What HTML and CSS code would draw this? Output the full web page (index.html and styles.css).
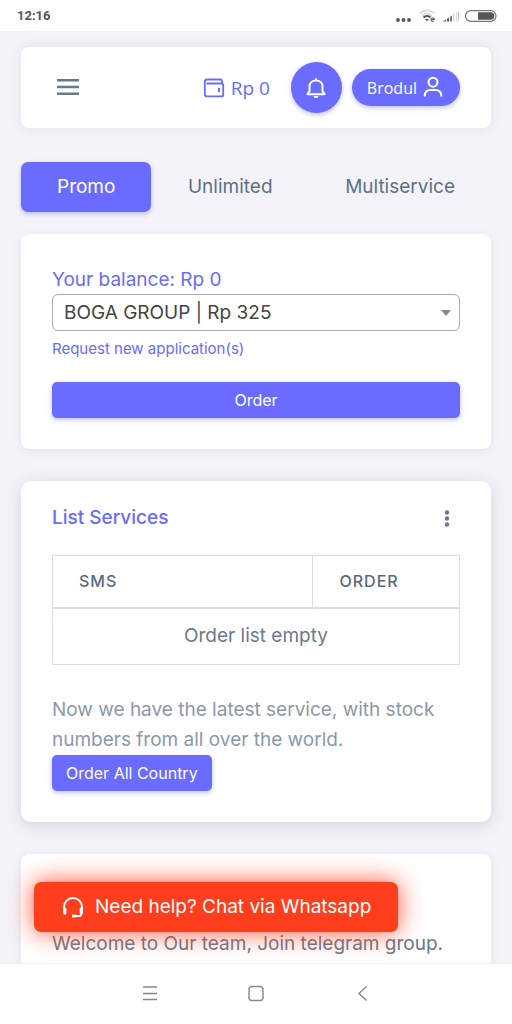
FILE: index.html
```html
<!DOCTYPE html>
<html lang="en">
<head>
<meta charset="utf-8">
<meta name="viewport" content="width=device-width, initial-scale=1">
<title>Order</title>
<link rel="stylesheet" href="styles.css">
</head>
<body>
<div class="status-bar">
  <span class="clock">12:16</span>
  <svg class="status-icons" width="102" height="16" viewBox="0 0 102 16" aria-hidden="true">
    <g fill="#555"><circle cx="3" cy="12" r="1.9"/><circle cx="8.500" cy="12" r="1.9"/><circle cx="14" cy="12" r="1.9"/></g>
    <g fill="none" stroke-width="1.7">
      <path d="M24.500 5.500Q32 -1 39.500 5.500M27 8Q32 3.500 37 8" stroke="#ddd"/>
      <path d="M28.500 9.500Q32 6.500 35.500 9.500" stroke="#555" stroke-width="2"/>
    </g>
    <path d="M30 11h4l-2 2.300z" fill="#555"/>
    <path d="M36 11.500h3.500a1.700 1.700 0 1 0-.6 1.400" fill="none" stroke="#666" stroke-width="1.200"/>
    <path d="M48 13.500l3-2v2zM52 11l2-1.500v4h-2z" fill="#555"/>
    <path d="M55 8.700l2-1.300v6.100h-2z" fill="#777"/>
    <path d="M58 6.500l1.800-1.200v8.200H58zM61 4.500l1.500-1v10H61z" fill="#ddd"/><path d="M63 3.200l1-.7v11h-1z" fill="#ccc"/>
    <rect x="70.500" y="2.700" width="30.500" height="10.600" rx="5.300" fill="#fff" stroke="#777" stroke-width="1.200"/>
    <path d="M83 4.200h12.500a3.800 3.800 0 0 1 0 7.600H83z" fill="#555"/>
  </svg>
</div>

<main class="app">
  <header class="card navbar">
    <button class="icon-button" aria-label="Menu">
      <svg width="26" height="26" viewBox="0 0 26 26"><path d="M2 5.200h22M2 12h22M2 18.800h22" stroke="#697a8d" stroke-width="2.600"/></svg>
    </button>
    <div class="nav-end">
      <a class="wallet" href="#">
        <svg width="24" height="24" viewBox="0 0 24 24" fill="none" stroke="#696cff" stroke-width="1.800"><path d="M20 7.500V5.300A1.800 1.800 0 0 0 18.200 3.500H5A2.500 2.500 0 0 0 2.800 6v12.200A2.200 2.200 0 0 0 5 20.400h14.500a1.700 1.700 0 0 0 1.700-1.700V9.200a1.700 1.700 0 0 0-1.700-1.700H4.500"/><path d="M17 12v4" stroke-width="2"/></svg>
        <span>Rp 0</span>
      </a>
      <button class="bell" aria-label="Notifications">
        <svg width="24" height="24" viewBox="0 0 24 24"><path d="M12 22a2.600 2.600 0 0 0 2.600-2H9.400A2.600 2.600 0 0 0 12 22z" fill="#fff"/><path d="M5.500 15.500V10.500c0-3.300 2.500-6 6.500-6s6.500 2.700 6.500 6v5l1.900 1.900v.8H3.600v-.8zM12 2.200v2" fill="none" stroke="#fff" stroke-width="2" stroke-linejoin="round"/></svg>
      </button>
      <button class="profile">Brodul
        <svg width="24" height="24" viewBox="0 0 24 24" fill="none" stroke="#fff" stroke-width="2.100"><circle cx="12" cy="6.200" r="4.500"/><path d="M3.800 20.500v-1.300A5.200 5.200 0 0 1 9 14h6a5.200 5.200 0 0 1 5.200 5.200v1.300"/></svg>
      </button>
    </div>
  </header>

  <nav class="tabs">
    <button class="tab active">Promo</button>
    <button class="tab">Unlimited</button>
    <button class="tab">Multiservice</button>
  </nav>

  <section class="card">
    <label class="balance" for="application">Your balance: Rp 0</label>
    <div class="select-wrap">
      <select id="application"><option>BOGA GROUP | Rp 325</option></select>
      <svg class="caret" width="10" height="6" viewBox="0 0 10 6"><path d="M0 0h10L5 6z" fill="#888"/></svg>
    </div>
    <a class="request" href="#">Request new application(s)</a>
    <button class="button wide">Order</button>
  </section>

  <section class="card raised">
    <div class="card-head">
      <h2>List Services</h2>
      <button class="icon-button" aria-label="More options">
        <svg width="26" height="26" viewBox="0 0 26 26" fill="#697a8d"><circle cx="13" cy="7.500" r="2.200"/><circle cx="13" cy="13.500" r="2.200"/><circle cx="13" cy="19.500" r="2.200"/></svg>
      </button>
    </div>
    <table>
      <thead><tr><th class="service">SMS</th><th>ORDER</th></tr></thead>
      <tbody><tr><td colspan="2">Order list empty</td></tr></tbody>
    </table>
    <p class="note">Now we have the latest service, with stock numbers from all over the world.</p>
    <button class="button">Order All Country</button>
  </section>

  <section class="card welcome">
    <p>Welcome to Our team, Join telegram group.</p>
  </section>

  <a class="chat" href="#">
    <svg width="24" height="24" viewBox="0 0 24 24" fill="none" stroke="#fff" stroke-width="2"><path d="M3 15v-3a9 9 0 0 1 18 0v3"/><path d="M3.700 14v4M20.300 14v4" stroke-width="3.300" stroke-linecap="round"/><path d="M20 17.500v1.500a2 2 0 0 1-2 2h-6"/><path d="M11 21h4" stroke-width="2.800"/></svg>
    <span>Need help? Chat via Whatsapp</span>
  </a>
</main>

<nav class="system-nav">
  <button aria-label="Recent apps"><svg width="20" height="20" viewBox="0 0 20 20"><path d="M3 3h14M3 9.500h14M3 15.500h14"/></svg></button>
  <button aria-label="Home"><svg width="20" height="20" viewBox="0 0 20 20"><rect x="3" y="2.500" width="14" height="14" rx="3"/></svg></button>
  <button aria-label="Back"><svg width="20" height="20" viewBox="0 0 20 20"><path d="M14.500 2.500L7 9.500l7.500 7"/></svg></button>
</nav>
</body>
</html>
```
FILE: styles.css
```css
* { box-sizing: border-box; }
body {
  margin: 0;
  height: 100vh;
  display: flex;
  flex-direction: column;
  background: #f4f3f9;
  color: #697a8d;
  font: 19px/30px Inter, "Liberation Sans", sans-serif;
}
button, select { font: inherit; margin: 0; }
button { border: 0; padding: 0; background: none; color: inherit; cursor: pointer; }
a { text-decoration: none; }
svg { display: block; flex: none; }

.status-bar {
  display: flex;
  flex: none;
  align-items: center;
  justify-content: space-between;
  height: 31px;
  padding: 0 15px 0 17px;
  background: #fff;
}
.clock { color: #555; font-family: Roboto, sans-serif; font-size: 13px; font-weight: 700; }

.app {
  position: relative;
  flex: 1;
  min-height: 0;
  overflow: hidden;
  padding: 16px 21px 0;
}
.card {
  margin-bottom: 32px;
  padding: 31px;
  border-radius: 8px;
  background: #fff;
  box-shadow: 0 2px 8px rgba(67, 89, 113, .1);
}
.card.raised { border-radius: 10px; box-shadow: 0 3px 16px rgba(67, 89, 113, .2); }

.navbar {
  display: flex;
  align-items: center;
  justify-content: space-between;
  height: 81px;
  margin-bottom: 34px;
  padding: 0 31px 0 34px;
  box-shadow: 0 0 12px rgba(67, 89, 113, .1);
}
.nav-end { display: flex; align-items: center; gap: 10px; }
.wallet {
  display: flex;
  align-items: center;
  gap: 5px;
  margin-right: 11px;
  color: #696cff;
  font-family: "Open Sans", sans-serif;
}
.bell {
  display: grid;
  place-items: center;
  width: 51px;
  height: 51px;
  border-radius: 50%;
  background: #696cff;
  box-shadow: 0 2px 5px rgba(105, 108, 255, .4);
}
.profile {
  display: flex;
  align-items: center;
  gap: 4px;
  height: 37px;
  padding: 0 15px;
  border-radius: 19px;
  background: #696cff;
  box-shadow: 0 2px 5px rgba(105, 108, 255, .4);
  color: #fff;
  font-family: "Open Sans", sans-serif;
  font-size: 16px;
}

.tabs { display: flex; justify-content: space-between; margin-bottom: 22px; }
.tab { height: 50px; padding: 0 36px; border-radius: 7px; color: #5d7188; }
.tab.active { background: #696cff; box-shadow: 0 2px 5px rgba(105, 108, 255, .4); color: #fff; }

.balance { display: block; height: 29px; color: #696cff; }
.select-wrap { position: relative; }
select {
  display: block;
  width: 100%;
  height: 37px;
  padding: 0 30px 0 11px;
  border: 1px solid #aaa;
  border-radius: 6px;
  appearance: none;
  background: #fff;
  color: #444;
}
.caret { position: absolute; right: 9px; top: 16px; pointer-events: none; }
.request {
  display: block;
  width: fit-content;
  margin: 7px 0 22px;
  color: #696cff;
  font-size: 15px;
  line-height: 22px;
}
.button {
  display: block;
  height: 36px;
  padding: 0 14px;
  border-radius: 5px;
  background: #696cff;
  box-shadow: 0 2px 5px rgba(105, 108, 255, .4);
  color: #fff;
  font-size: 16px;
}
.wide { width: 100%; }

.raised { padding-top: 22px; }
.card-head { display: flex; align-items: center; justify-content: space-between; margin-bottom: 22px; }
.card-head h2 { margin: 0; color: #696cff; font-size: 19px; font-weight: 500; }
table { width: 100%; border-collapse: collapse; }
th, td { border: 1px solid #d9dee3; }
th {
  height: 52px;
  padding: 0 26px;
  border-bottom-width: 2px;
  color: #566a7f;
  font-size: 16px;
  font-weight: 500;
  letter-spacing: 1px;
  text-align: left;
}
.service { width: 64%; }
td { height: 57px; padding: 0; text-align: center; }
.note { margin: 30px 0 0; color: #8a99aa; }
.welcome { padding-top: 75px; }
.welcome p { margin: 0; white-space: nowrap; }

.chat {
  position: absolute;
  bottom: 31px;
  left: 34px;
  display: flex;
  align-items: center;
  gap: 10px;
  height: 50px;
  padding: 0 27px;
  border-radius: 7px;
  background: #ff3e1d;
  box-shadow: 0 0 24px rgba(255, 62, 29, .9);
  color: #fff;
  white-space: nowrap;
}

.system-nav {
  display: flex;
  flex: none;
  align-items: center;
  justify-content: center;
  gap: 86px;
  height: 61px;
  border-top: 1px solid #eee;
  background: #fff;
}
.system-nav svg { fill: none; stroke: #888; stroke-width: 1.4; }
```
